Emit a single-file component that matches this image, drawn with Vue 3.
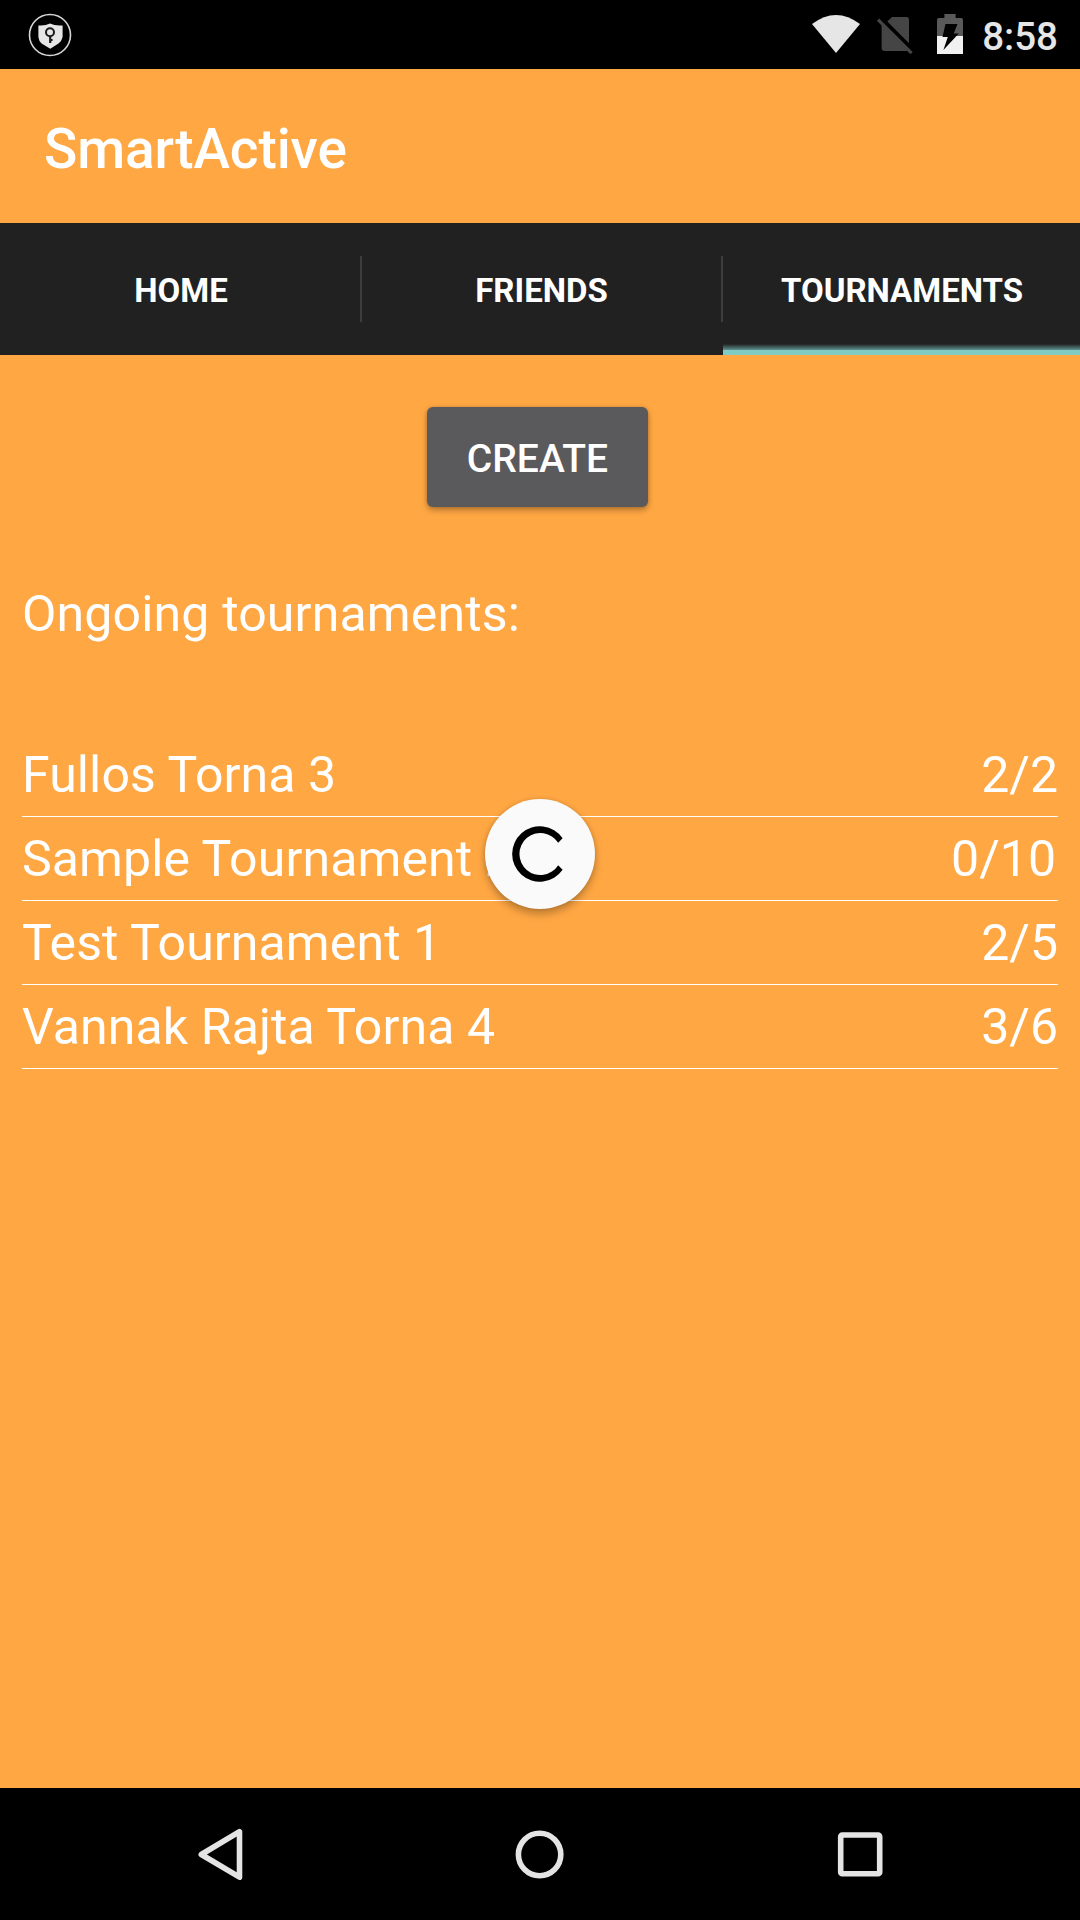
<script setup>
const tabs = ['HOME', 'FRIENDS', 'TOURNAMENTS']
const active = 'TOURNAMENTS'
const tournaments = [
  { name: 'Fullos Torna 3', slots: '2/2' },
  { name: 'Sample Tournament 2', slots: '0/10' },
  { name: 'Test Tournament 1', slots: '2/5' },
  { name: 'Vannak Rajta Torna 4', slots: '3/6' },
]
</script>

<template>
  <div class="screen">
    <header class="status">
      <svg class="vpn" width="44" height="44" viewBox="0 0 44 44">
        <circle cx="22" cy="22" r="20.5" fill="none" stroke="#d6d6d6" stroke-width="1.6" />
        <path d="M10.4 12.4Q17 13 22 10.6Q27 13 34.6 12.4V24Q33.8 28 30.5 30.5L22.3 35.8L13.6 30.5Q10.8 28 10.4 24Z" fill="#e6e6e6" />
        <circle cx="22" cy="19.3" r="4" fill="none" stroke="#1c1c1c" stroke-width="2" />
        <path d="M22.2 23.2V30M22.2 27H24.6" fill="none" stroke="#1c1c1c" stroke-width="2.2" />
      </svg>
      <div class="status-right">
        <svg width="152" height="69" viewBox="0 0 152 69">
          <path d="M0 24Q24 5.8 48 24L24 53Z" fill="#e6e6e6" />
          <path d="M80 17H94.5Q97 17 97 19.5V43.3L75.3 21.6Z" fill="#454545" />
          <path d="M69.6 24.5L95.6 50.3Q94.8 51 93.4 51H72.7Q69.6 51 69.6 48Z" fill="#454545" />
          <path d="M66 19.7L99.6 53.1" stroke="#454545" stroke-width="3.2" />
          <path d="M125 36V20Q125 18 127 18H132.4V14H143.6V18H149Q151 18 151 20V36Z" fill="#595959" />
          <path d="M125 36H151V54H125Z" fill="#f1f1f1" />
          <path d="M133.5 24H145.5L141.7 33.4H146.8L131.4 50L135.8 36.9H130.5Z" fill="#000" />
        </svg>
        <span class="clock">8:58</span>
      </div>
    </header>

    <div class="toolbar"><h1>SmartActive</h1></div>

    <nav class="tabs">
      <div v-for="t in tabs" :key="t" class="tab" :class="{ active: t === active }">
        <span>{{ t }}</span>
      </div>
    </nav>

    <main class="content">
      <button class="create">CREATE</button>
      <h2>Ongoing tournaments:</h2>
      <ul>
        <li v-for="t in tournaments" :key="t.name">
          <span class="name">{{ t.name }}</span>
          <span :class="{ wide: t.slots.length > 3 }">{{ t.slots }}</span>
        </li>
      </ul>
      <div class="spinner">
        <svg width="110" height="110" viewBox="0 0 110 110">
          <path d="M77.6 39.2A27.7 27.7 0 1 0 77.6 70.8L73.2 66.2A21 21 0 1 1 73.2 43.8Z" fill="#000" />
        </svg>
      </div>
    </main>

    <footer class="navbar">
      <svg width="52" height="60" viewBox="0 0 52 60">
        <path d="M43.2 7.3V52.9L5 30.2Z" transform="translate(2.3 .3)" fill="none" stroke="#e4e4e4" stroke-width="5.6" stroke-linejoin="round" />
      </svg>
      <svg width="52" height="60" viewBox="0 0 52 60">
        <circle cx="25.6" cy="30.5" r="21.2" fill="none" stroke="#e4e4e4" stroke-width="5.6" />
      </svg>
      <svg width="52" height="60" viewBox="0 0 52 60">
        <rect x="6.7" y="11" width="39" height="38.8" rx="1.6" fill="none" stroke="#e4e4e4" stroke-width="5.6" />
      </svg>
    </footer>
  </div>
</template>

<style>
body {
  margin: 0;
}
</style>

<style scoped>
.screen {
  width: 1080px;
  height: 1920px;
  display: flex;
  flex-direction: column;
  background: #ffa743;
  color: #fff;
  font-family: Roboto, sans-serif;
  overflow: hidden;
}
.status {
  height: 69px;
  flex: none;
  background: #000;
  display: flex;
  justify-content: space-between;
  align-items: center;
  padding: 0 22px 0 28px;
}
.status-right {
  display: flex;
  align-items: center;
}
.status-right svg {
  margin-right: 18px;
}
.clock {
  font-size: 38.5px;
  font-weight: 500;
  line-height: 65px;
  padding-top: 3px;
  color: #e6e6e6;
}
.toolbar {
  height: 154px;
  flex: none;
  box-sizing: border-box;
  padding: 3px 44px 0;
  display: flex;
  align-items: center;
}
h1 {
  margin: 0;
  padding-top: 3px;
  font-size: 55px;
  font-weight: 500;
  line-height: 64px;
  letter-spacing: -0.1px;
}
.tabs {
  height: 132px;
  flex: none;
  display: grid;
  grid-template-columns: 360px 361px 359px;
  background: #212121;
}
.tab {
  display: flex;
  align-items: center;
  justify-content: center;
  font-size: 33px;
  font-weight: 700;
}
.tab:first-child {
  padding-left: 2px;
}
.tab span {
  line-height: 40px;
  padding-top: 3px;
}
.tab + .tab::before {
  content: '';
  width: 2px;
  height: 66px;
  margin-right: auto;
  background: #3d3d3d;
}
.tab + .tab span {
  margin-right: auto;
}
.tab.active span {
  padding-left: 1px;
}
.tab.active {
  background: linear-gradient(#212121 0, #212121 121px, #60938f 127px, #80cbc4 127px) 2px 0 no-repeat;
}
.content {
  position: relative;
  flex: 1;
  padding: 52px 22px 0;
}
.create {
  display: block;
  width: 221px;
  height: 100px;
  margin: 0 0 0 405px;
  padding: 4px 0 0;
  border: 0;
  border-radius: 6px;
  background: #5a595b;
  color: #fff;
  font: 500 39px/46px Roboto, sans-serif;
  box-shadow: 0 3px 6px rgba(0, 0, 0, 0.3), 0 0 3px rgba(0, 0, 0, 0.15);
}
h2 {
  margin: 74px 0 86px;
  font-size: 50px;
  font-weight: 400;
  line-height: 66px;
  letter-spacing: 0.16px;
}
ul {
  list-style: none;
  margin: 0;
  padding: 0;
}
li {
  display: flex;
  justify-content: space-between;
  height: 83px;
  border-bottom: 1px solid #fff;
  font-size: 50px;
  line-height: 84px;
}
.name {
  letter-spacing: 0.1px;
}
.wide {
  padding-right: 2px;
}
.spinner {
  position: absolute;
  left: 485px;
  top: 444px;
  width: 110px;
  height: 110px;
  border-radius: 50%;
  background: #fafafa;
  box-shadow: 0 5px 9px rgba(0, 0, 0, 0.26), 0 0 4px rgba(0, 0, 0, 0.12);
}
.spinner svg {
  display: block;
}
.navbar {
  height: 132px;
  flex: none;
  background: #000;
  display: flex;
  align-items: center;
  justify-content: center;
  gap: 268px;
}
</style>
